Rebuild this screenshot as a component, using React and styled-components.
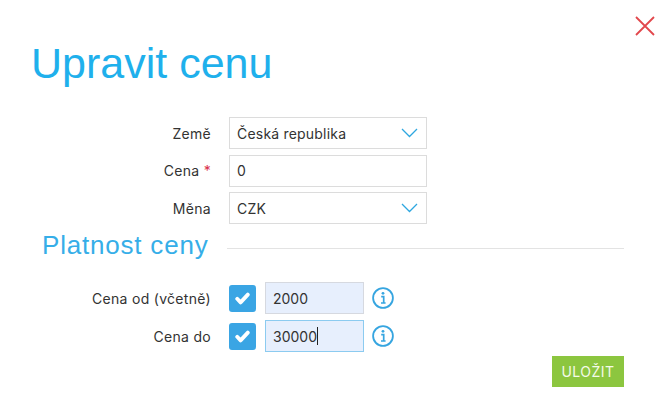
import styled, { createGlobalStyle } from 'styled-components';

const GlobalStyle = createGlobalStyle`
  html, body {
    margin: 0;
    padding: 0;
    background: #fff;
  }
`;

const Modal = styled.div`
  position: relative;
  box-sizing: border-box;
  width: 667px;
  height: 412px;
  padding: 36px 43px 0 31px;
  background: #fff;
  font-family: Inter, "Liberation Sans", sans-serif;
  font-size: 14px;
  color: #333;
  overflow: hidden;
`;

const CloseButton = styled.button`
  position: absolute;
  top: 16px;
  right: 12px;
  width: 20px;
  height: 20px;
  padding: 0;
  border: none;
  background: none;
  svg {
    display: block;
  }
`;

const Title = styled.h1`
  margin: 0 0 27px;
  font-family: "Liberation Sans", Arial, sans-serif;
  font-size: 43px;
  line-height: 54px;
  font-weight: 400;
  color: #1fb0ec;
`;

const Form = styled.div`
  display: flex;
  flex-direction: column;
  gap: 5.5px;
`;

const Row = styled.div`
  display: flex;
  align-items: center;
  gap: 18px;
  height: 32px;
`;

const Label = styled.label`
  width: 180px;
  text-align: right;
  white-space: nowrap;
  letter-spacing: 0.3px;
`;

const Required = styled.span`
  color: #d9304a;
`;

const Field = styled.div`
  box-sizing: border-box;
  display: flex;
  align-items: center;
  justify-content: space-between;
  width: 198px;
  height: 32px;
  padding: 0 8px 0 7px;
  border: 1px solid #dcdcdc;
  background: #fff;
  color: #333;
  letter-spacing: 0.2px;
`;

const Section = styled.div`
  display: flex;
  align-items: center;
  gap: 18px;
  margin: 5px 0 21px 11px;
`;

const SectionTitle = styled.h2`
  margin: 0;
  font-family: "Liberation Sans", Arial, sans-serif;
  font-size: 26px;
  line-height: 32px;
  font-weight: 400;
  letter-spacing: 0.8px;
  color: #36aee8;
  white-space: nowrap;
`;

const Divider = styled.div`
  flex: 1;
  height: 1px;
  margin-top: 6px;
  background: #e3e3e3;
`;

const Limits = styled.div`
  display: flex;
  flex-direction: column;
  gap: 6px;
`;

const Controls = styled.div`
  display: flex;
  align-items: center;
  gap: 8px;
`;

const Check = styled.div`
  display: flex;
  align-items: center;
  justify-content: center;
  width: 27px;
  height: 27px;
  margin-right: 1px;
  border-radius: 3px;
  background: #3aa5e4;
`;

const AmountField = styled.div`
  box-sizing: border-box;
  display: flex;
  align-items: center;
  width: 99px;
  height: 32px;
  padding: 0 7px;
  background: #e7effd;
  border: 1px solid ${(props) => (props.$focused ? '#8ccbf0' : '#d6d9e0')};
  color: #333;
`;

const Caret = styled.span`
  display: inline-block;
  width: 1px;
  height: 18px;
  background: #222;
`;

const Footer = styled.div`
  display: flex;
  justify-content: flex-end;
  margin-top: 4px;
`;

const SaveButton = styled.button`
  width: 72px;
  height: 31px;
  padding: 0;
  border: none;
  background: #8cc63f;
  color: #f4fae8;
  font-family: Inter, "Liberation Sans", sans-serif;
  font-size: 14px;
  font-weight: 400;
  letter-spacing: 0.5px;
`;

const Chevron = () => (
  <svg width="17" height="10" viewBox="0 0 17 10" fill="none">
    <path d="M1 1l7.5 7.5L16 1" stroke="#2ea7e0" strokeWidth="1.3" />
  </svg>
);

const CheckMark = () => (
  <svg width="15" height="13" viewBox="0 0 15 13" fill="none">
    <path d="M2.2 6.8l3.4 3.6L12.8 2.6" stroke="#fff" strokeWidth="3.8" strokeLinecap="round" strokeLinejoin="round" />
  </svg>
);

const InfoIcon = () => (
  <svg width="22" height="22" viewBox="0 0 22 22" fill="none">
    <circle cx="11" cy="11" r="9.9" stroke="#36a5e0" strokeWidth="1.8" />
    <circle cx="11" cy="6.3" r="1.4" fill="#36a5e0" />
    <path d="M9.2 9.6h2.5v6.4M9 16h4.6" stroke="#36a5e0" strokeWidth="1.7" />
  </svg>
);

const App = () => {
  return (
    <Modal>
      <GlobalStyle />
      <CloseButton>
        <svg width="20" height="20" viewBox="0 0 20 20" fill="none">
          <path d="M1 1l18 18M19 1L1 19" stroke="#e2474c" strokeWidth="1.8" />
        </svg>
      </CloseButton>
      <Title>Upravit cenu</Title>
      <Form>
        <Row>
          <Label>Země</Label>
          <Field>
            Česká republika
            <Chevron />
          </Field>
        </Row>
        <Row>
          <Label>
            Cena <Required>*</Required>
          </Label>
          <Field>0</Field>
        </Row>
        <Row>
          <Label>Měna</Label>
          <Field>
            CZK
            <Chevron />
          </Field>
        </Row>
      </Form>
      <Section>
        <SectionTitle>Platnost ceny</SectionTitle>
        <Divider />
      </Section>
      <Limits>
        <Row>
          <Label>Cena od (včetně)</Label>
          <Controls>
            <Check>
              <CheckMark />
            </Check>
            <AmountField>2000</AmountField>
            <InfoIcon />
          </Controls>
        </Row>
        <Row>
          <Label>Cena do</Label>
          <Controls>
            <Check>
              <CheckMark />
            </Check>
            <AmountField $focused>
              30000
              <Caret />
            </AmountField>
            <InfoIcon />
          </Controls>
        </Row>
      </Limits>
      <Footer>
        <SaveButton>ULOŽIT</SaveButton>
      </Footer>
    </Modal>
  );
};

export default App;
